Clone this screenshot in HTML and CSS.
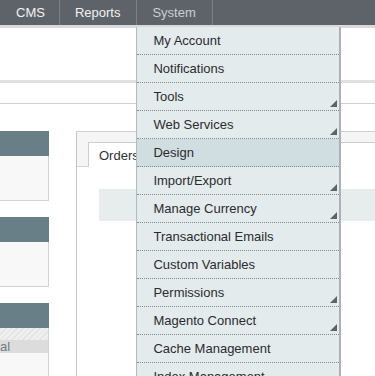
FILE: index.html
```html
<!DOCTYPE html>
<html lang="en">
<head>
    <meta charset="UTF-8">
    <meta name="viewport" content="width=device-width, initial-scale=1.0">
    <title>Magento Admin</title>
    <link rel="stylesheet" href="styles.css">
</head>
<body>
    <nav class="nav-bar">
        <ul class="nav-list">
            <li class="nav-item">CMS</li>
            <li class="nav-item">Reports</li>
            <li class="nav-item active">System
                <ul class="dropdown">
                    <li class="dropdown-item">My Account</li>
                    <li class="dropdown-item">Notifications</li>
                    <li class="dropdown-item has-sub">Tools</li>
                    <li class="dropdown-item has-sub">Web Services</li>
                    <li class="dropdown-item hover">Design</li>
                    <li class="dropdown-item has-sub">Import/Export</li>
                    <li class="dropdown-item has-sub">Manage Currency</li>
                    <li class="dropdown-item">Transactional Emails</li>
                    <li class="dropdown-item">Custom Variables</li>
                    <li class="dropdown-item has-sub">Permissions</li>
                    <li class="dropdown-item has-sub">Magento Connect</li>
                    <li class="dropdown-item">Cache Management</li>
                    <li class="dropdown-item">Index Management</li>
                </ul>
            </li>
        </ul>
    </nav>

    <div class="page-header"></div>
    <div class="toolbar"></div>

    <div class="content">
        <aside class="sidebar">
            <div class="side-box">
                <div class="side-head"></div>
                <div class="side-body"></div>
            </div>
            <div class="side-box">
                <div class="side-head"></div>
                <div class="side-body"></div>
            </div>
            <div class="side-box">
                <div class="side-head"></div>
                <div class="side-stripes"></div>
                <div class="side-row">al</div>
                <div class="side-body last"></div>
            </div>
        </aside>

        <section class="panel">
            <div class="tabs">
                <div class="tab">Orders</div>
            </div>
            <div class="panel-body">
                <div class="grid-head"></div>
            </div>
        </section>
    </div>
</body>
</html>
```

FILE: styles.css
```css
body {
    margin: 0;
    font-family: "Liberation Sans", Arial, sans-serif;
    font-size: 13px;
    background-color: #fff;
    overflow: hidden;
    height: 376px;
}

ul {
    list-style: none;
    margin: 0;
    padding: 0;
}

.nav-bar {
    height: 25px;
    background-color: #5e6369;
    border-bottom: 3px solid #d9d9d9;
}

.nav-list {
    display: flex;
    height: 25px;
}

.nav-item {
    position: relative;
    padding: 0 16px 0 15px;
    line-height: 25px;
    color: #f2f2f2;
    border-right: 1px solid #7c8187;
}

.nav-item:first-child {
    padding-left: 16px;
    padding-right: 14px;
}

.nav-item.active {
    color: #c9ced2;
}

.dropdown {
    position: absolute;
    top: 27px;
    left: -1px;
    width: 202px;
    background-color: #e3ebec;
    border-left: 1px solid #b3bbbe;
    border-right: 2px solid #aab2b5;
    z-index: 10;
}

.dropdown-item {
    position: relative;
    height: 27px;
    line-height: 27px;
    padding-left: 16px;
    color: #2c2c2c;
    border-bottom: 1px dotted #7f8b8f;
}

.dropdown-item.hover {
    background-color: #d0dde1;
}

.dropdown-item.has-sub::after {
    content: "";
    position: absolute;
    right: 2px;
    bottom: 3px;
    width: 0;
    height: 0;
    border-left: 7px solid transparent;
    border-bottom: 7px solid #5c6569;
}

.page-header {
    height: 52px;
    border-bottom: 3px solid #e0e0e0;
}

.toolbar {
    height: 20px;
    border-bottom: 1px solid #cfcfcf;
}

.content {
    display: flex;
    padding-top: 27px;
}

.sidebar {
    width: 49px;
    flex-shrink: 0;
}

.side-box {
    margin-bottom: 16px;
}

.side-head {
    height: 25px;
    background-color: #687f88;
}

.side-body {
    height: 44px;
    background-color: #f8f8f8;
    border-right: 1px solid #d2d2d2;
    border-bottom: 1px solid #d2d2d2;
}

.side-body.last {
    height: 40px;
    border-bottom: none;
}

.side-stripes {
    height: 12px;
    background-color: #efefef;
    background-image: repeating-linear-gradient(135deg, #e2e2e2 0 1px, transparent 1px 4px);
    border-right: 1px solid #d2d2d2;
}

.side-row {
    height: 13px;
    line-height: 13px;
    background-color: #dcdcdc;
    color: #6f7c82;
    font-size: 13px;
    text-align: right;
    padding-right: 40px;
    border-right: 1px solid #d2d2d2;
}

.panel {
    flex: 1;
    margin-left: 27px;
    border-left: 1px solid #c6c6c6;
    border-top: 1px solid #cfcfcf;
    height: 260px;
}

.tabs {
    height: 34px;
    background-color: #f5f5f5;
    border-bottom: 1px solid #d4d4d4;
    display: flex;
    align-items: flex-end;
    padding-left: 11px;
}

.tab {
    height: 24px;
    line-height: 26px;
    padding-left: 10px;
    flex: 1;
    background-color: #fff;
    border-top: 1px solid #cdcdcd;
    border-left: 1px solid #cdcdcd;
    margin-bottom: -1px;
    color: #2f2f2f;
}

.panel-body {
    padding: 22px 0 0 22px;
}

.grid-head {
    height: 32px;
    background-color: #e7eded;
}
```
